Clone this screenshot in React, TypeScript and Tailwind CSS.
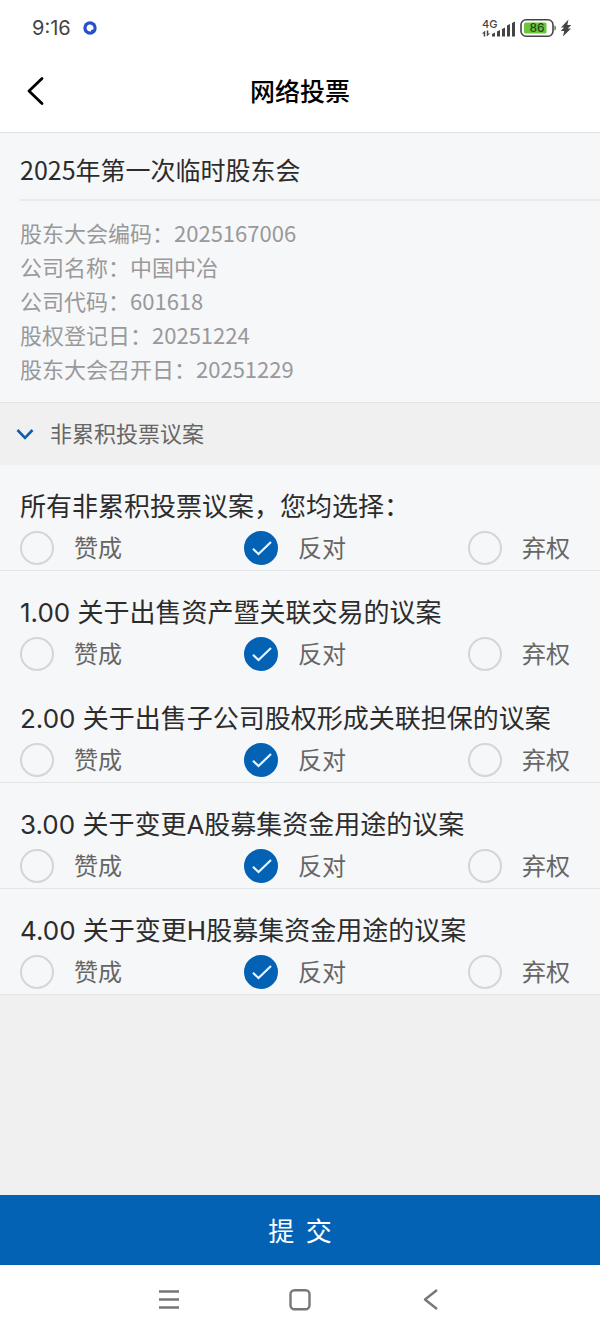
import { useState } from 'react';

const meeting = [
    { label: '股东大会编码', value: '2025167006' },
    { label: '公司名称', value: '中国中冶' },
    { label: '公司代码', value: '601618' },
    { label: '股权登记日', value: '20251224' },
    { label: '股东大会召开日', value: '20251229' },
];

const proposals = [
    { id: 'all', title: '所有非累积投票议案，您均选择：', line: true },
    { id: 'p1', title: '1.00 关于出售资产暨关联交易的议案', line: false },
    { id: 'p2', title: '2.00 关于出售子公司股权形成关联担保的议案', line: true },
    { id: 'p3', title: '3.00 关于变更A股募集资金用途的议案', line: true },
    { id: 'p4', title: '4.00 关于变更H股募集资金用途的议案', line: true },
];

const choices = ['赞成', '反对', '弃权'];

function StatusBar() {
    return (
        <div className="flex h-14 items-center justify-between bg-white pl-8 pr-7 font-['Inter',sans-serif] text-[#444444]">
            <div className="flex items-center gap-3">
                <span className="text-xl">9:16</span>
                <svg width="14" height="14" viewBox="0 0 14 14">
                    <circle cx="7" cy="7" r="6.7" fill="#2450d0" />
                    <path d="M7 3.500a3.500 3.500 0 1 0 1.200 6.800l-.2-1.300 2.300-.6A3.500 3.500 0 0 0 7 3.500z" fill="#fff" />
                </svg>
            </div>
            <div className="flex items-center gap-1">
                <svg width="34" height="26" viewBox="0 -3 34 26" fill="#444444">
                    <text x="0" y="10" fontSize="11" fontWeight="500">4G</text>
                    <path d="M0 15.500l3.200-3v6H1.700v-3zM8 15.500l-3.200 3v-6h1.500v3z" />
                    <path d="M10 16l3-1.500v4h-3zM15 13.500l3-1.500v6.500h-3zM20 11l3-1.500v9h-3zM25 7.500l3-1.500v12.500h-3zM30 5l3-1.500v15h-3z" />
                </svg>
                <svg width="36" height="20" viewBox="0 0 36 20">
                    <rect x="1" y="1.800" width="32" height="16.400" rx="5" fill="#fff" stroke="#444444" strokeWidth="1.600" />
                    <rect x="4" y="4.500" width="22.500" height="11" rx="1.500" fill="#6cc63c" />
                    <path d="M34.500 7.500c1.700.3 1.700 4.700 0 5z" fill="#444444" />
                    <text x="17" y="14.200" textAnchor="middle" fontSize="12" fontWeight="500" fill="#1f4a17">86</text>
                </svg>
                <svg width="12" height="20" viewBox="0 0 12 20" fill="#444444">
                    <path d="M8.500 1.500L1 9.500h3.200L.8 13h3.400L3 18.500 11 10.500H7.800L11.200 7H7.300z" />
                </svg>
            </div>
        </div>
    );
}

function Choice({ name, label, checked, onChange }: { name: string; label: string; checked: boolean; onChange: () => void }) {
    return (
        <label className="flex h-[34px] items-center gap-5 text-2xl text-[#666666]">
            <span className="grid size-[34px] place-items-center">
                <input
                    type="radio"
                    name={name}
                    checked={checked}
                    onChange={onChange}
                    className="peer col-start-1 row-start-1 size-[34px] appearance-none rounded-full border-2 border-[#d4d5d7] checked:border-[#0462b5] checked:bg-[#0462b5]"
                />
                <svg className="pointer-events-none col-start-1 row-start-1 hidden peer-checked:block" width="34" height="34" viewBox="0 0 34 34" fill="none" stroke="#e9f4ff" strokeWidth="2.200">
                    <path d="M9 17.800l5.500 5.200L27 11" />
                </svg>
            </span>
            <span className="pb-0.5">{label}</span>
        </label>
    );
}

function App() {
    const [votes, setVotes] = useState<Record<string, string>>(
        Object.fromEntries(proposals.map((p) => [p.id, '反对']))
    );

    const vote = (id: string, choice: string) => {
        if (id === 'all') {
            setVotes(Object.fromEntries(proposals.map((p) => [p.id, choice])));
        } else {
            setVotes({ ...votes, [id]: choice });
        }
    };

    return (
        <div className="flex min-h-screen flex-col bg-[#f0f0f0] font-['Noto_Sans_CJK_SC',sans-serif]">
            <StatusBar />
            <header className="grid h-[77px] grid-cols-[1fr_auto_1fr] items-center border-b border-[#dfe2e5] bg-white px-5 pb-1.5">
                <button type="button" aria-label="返回" className="flex size-8 items-center justify-center">
                    <svg width="32" height="32" viewBox="0 0 32 32" fill="none" stroke="#000" strokeWidth="2.800" strokeLinecap="round" strokeLinejoin="round">
                        <path d="M22 3.500L9 16 22 28.500" />
                    </svg>
                </button>
                <h1 className="text-[25px] font-medium text-black">网络投票</h1>
            </header>

            <section className="border-b border-[#e2e3e5] bg-[#f6f7f9]">
                <h2 className="ml-5 border-b-2 border-[#e8eaec] pb-3 pt-[18px] text-[25px] leading-9 text-[#2c2c2c]">2025年第一次临时股东会</h2>
                <div className="px-5 pb-[17px] pt-[14px] text-[22px] leading-[34px] text-[#999999]">
                    {meeting.map((row) => (
                        <p key={row.label}>{row.label}：{row.value}</p>
                    ))}
                </div>
            </section>

            <button type="button" className="flex h-[62px] items-center gap-4 px-4 text-[22px] text-[#666666]">
                <svg width="18" height="14" viewBox="0 0 18 14" fill="none" stroke="#165ca3" strokeWidth="2.600">
                    <path d="M1.500 3L9 10.800 16.500 3" />
                </svg>
                <span className="pb-1">非累积投票议案</span>
            </button>

            <form className="flex grow flex-col" onSubmit={(e) => e.preventDefault()}>
                {proposals.map((p) => (
                    <div
                        key={p.id}
                        role="radiogroup"
                        aria-labelledby={p.id}
                        className={p.line ? 'border-b border-[#e2e4e6] bg-[#f6f7f9]' : 'border-b border-[#f6f7f9] bg-[#f6f7f9]'}
                    >
                        <p id={p.id} className="pl-5 pt-[25px] font-['Inter','Noto_Sans_CJK_SC',sans-serif] text-[26px] leading-[34px] text-[#2c2c2c]">{p.title}</p>
                        <div className="flex justify-between pb-[5px] pl-5 pr-[30px] pt-[7px]">
                            {choices.map((c) => (
                                <Choice key={c} name={p.id} label={c} checked={votes[p.id] === c} onChange={() => vote(p.id, c)} />
                            ))}
                        </div>
                    </div>
                ))}
                <button type="submit" className="mt-auto h-[70px] bg-[#0462b5] pb-0.5 text-[26px] text-white">提&nbsp; 交</button>
            </form>

            <nav className="flex h-[69px] items-center justify-center gap-[109px] bg-white">
                <button type="button" aria-label="菜单">
                    <svg width="22" height="22" viewBox="0 0 22 22" stroke="#777777" strokeWidth="2.400">
                        <path d="M1 2.500h20M1 10.500h20M1 18.500h20" />
                    </svg>
                </button>
                <button type="button" aria-label="主页">
                    <svg width="22" height="22" viewBox="0 0 22 22" fill="none" stroke="#777777" strokeWidth="2.400">
                        <rect x="1.500" y="1.200" width="19" height="19" rx="4" />
                    </svg>
                </button>
                <button type="button" aria-label="后退">
                    <svg width="22" height="22" viewBox="0 0 22 22" fill="none" stroke="#777777" strokeWidth="2.400" strokeLinejoin="round">
                        <path d="M17 1L5 10.500 17 20" />
                    </svg>
                </button>
            </nav>
        </div>
    );
}

export default App;
